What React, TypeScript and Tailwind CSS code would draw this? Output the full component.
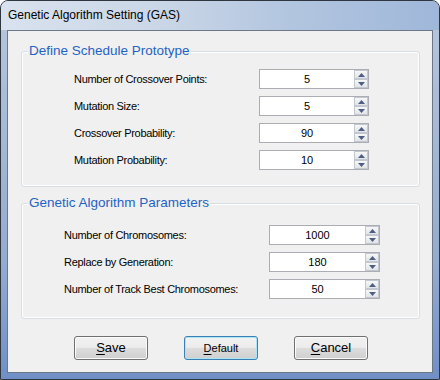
import React from "react";

const font = { fontFamily: '"Liberation Sans", Arial, sans-serif' };

function Spinner({ value, width }: { value: string; width: string }) {
  return (
    <div className={`flex h-[20px] ${width} border border-[#abadb3] bg-white`}>
      <div className="flex flex-1 items-center justify-center text-[11px] text-black">{value}</div>
      <div className="flex w-[14px] flex-col">
        <div className="flex h-[9px] items-center justify-center border border-[#c2c7d1] bg-[linear-gradient(to_bottom,#f7f7f7,#e2e4e8)]">
          <svg width="7" height="4" viewBox="0 0 7 4">
            <polygon points="0,4 7,4 3.5,0" fill="#4d5f80" />
          </svg>
        </div>
        <div className="flex h-[9px] items-center justify-center border border-[#c2c7d1] bg-[linear-gradient(to_bottom,#f7f7f7,#e2e4e8)]">
          <svg width="7" height="4" viewBox="0 0 7 4">
            <polygon points="0,0 7,0 3.5,4" fill="#4d5f80" />
          </svg>
        </div>
      </div>
    </div>
  );
}

function Row({ label, value, width }: { label: string; value: string; width: string }) {
  return (
    <div className="flex h-[20px] items-center justify-between">
      <span className="text-[11px] tracking-[-0.3px] text-black">{label}</span>
      <Spinner value={value} width={width} />
    </div>
  );
}

function GroupBox({ title, className, children }: { title: string; className: string; children: React.ReactNode }) {
  return (
    <div className={`relative rounded-[3px] border border-[#d5dfe5] shadow-[inset_0_0_0_1px_#ffffff] ${className}`}>
      <span className="absolute left-[6px] top-[-10px] bg-[#f0f0f0] px-[1px] text-[13.5px] leading-[18px] text-[#1f63c4]">
        {title}
      </span>
      {children}
    </div>
  );
}

function WinButton({ label, accel, focused, size }: { label: string; accel: number; focused?: boolean; size: string }) {
  return (
    <button
      className={`flex h-[24px] w-[74px] items-center justify-center rounded-[3px] border ${size} text-black ${
        focused
          ? "border-[#3c7fb1] shadow-[inset_0_0_0_1px_#a9e4f9]"
          : "border-[#707070] shadow-[inset_0_0_0_1px_#fbfbfb]"
      } bg-[linear-gradient(to_bottom,#f2f2f2_0%,#ebebeb_50%,#dddddd_51%,#cfcfcf_100%)]`}
    >
      <span>
        <span className="underline underline-offset-2">{label.slice(0, accel + 1)}</span>
        {label.slice(accel + 1)}
      </span>
    </button>
  );
}

export default function App() {
  return (
    <div style={font} className="h-[380px] w-[440px] bg-white">
      <div className="flex h-[380px] w-[440px] flex-col overflow-hidden rounded-t-[8px] border border-[#2f3640] bg-[linear-gradient(to_bottom,#b7c7dd,#93abd0_70%,#6f8fc6)]">
        <div className="flex h-[29px] items-center bg-[linear-gradient(to_right,#d9e2ee_0%,#cbd7e7_35%,#b3c6e0_65%,#9fb7d9_100%)] pb-[2px] pl-[7px] text-[12px] text-black">
          Genetic Algorithm Setting (GAS)
        </div>
        <div className="flex flex-1 flex-col px-[6px] pb-[6px]">
          <div className="flex flex-1 flex-col border border-[#6c7888] bg-[#f0f0f0] pl-[13px] pr-[12px] pt-[20px]">
            <GroupBox title="Define Schedule Prototype" className="pb-[16px] pl-[52px] pr-[50px] pt-[17px]">
              <div className="flex flex-col gap-[7px]">
                <Row label="Number of Crossover Points:" value="5" width="w-[110px]" />
                <Row label="Mutation Size:" value="5" width="w-[110px]" />
                <Row label="Crossover Probability:" value="90" width="w-[110px]" />
                <Row label="Mutation Probability:" value="10" width="w-[110px]" />
              </div>
            </GroupBox>
            <GroupBox title="Genetic Algorithm Parameters" className="mt-[16px] pb-[19px] pl-[42px] pr-[39px] pt-[21px]">
              <div className="flex flex-col gap-[7px]">
                <Row label="Number of Chromosomes:" value="1000" width="w-[111px]" />
                <Row label="Replace by Generation:" value="180" width="w-[111px]" />
                <Row label="Number of Track Best Chromosomes:" value="50" width="w-[111px]" />
              </div>
            </GroupBox>
            <div className="mt-[17px] flex gap-[36px] pl-[53px]">
              <WinButton label="Save" accel={0} size="text-[13px]" />
              <WinButton label="Default" accel={0} size="text-[11px]" focused />
              <WinButton label="Cancel" accel={0} size="text-[13px]" />
            </div>
          </div>
        </div>
      </div>
    </div>
  );
}
